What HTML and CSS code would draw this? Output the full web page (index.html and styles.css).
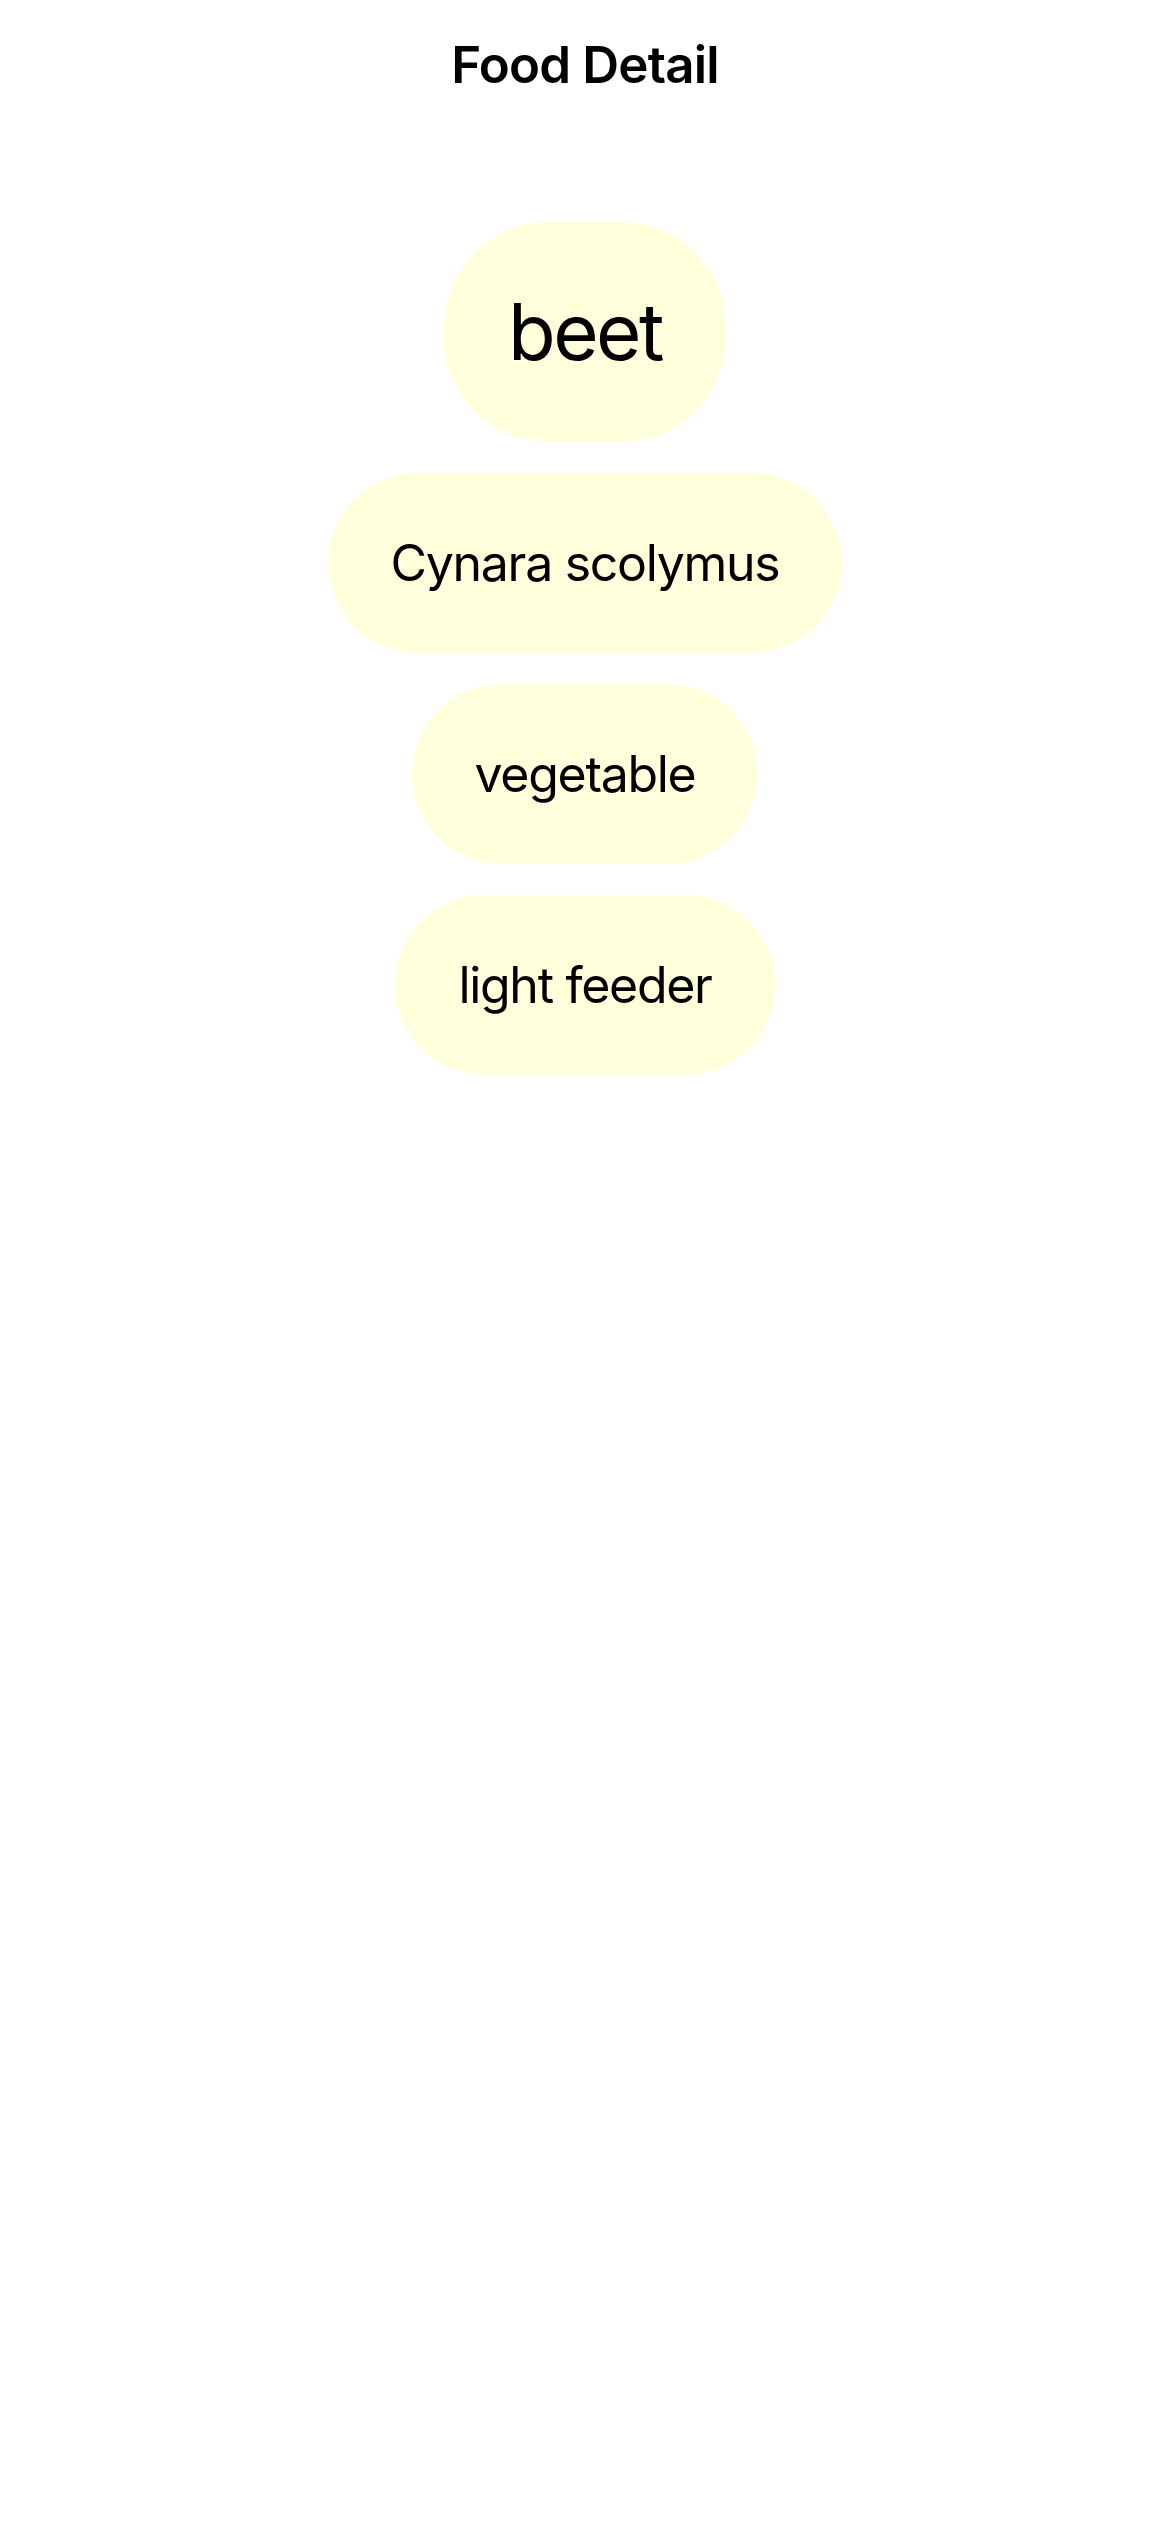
FILE: index.html
```html
<!DOCTYPE html>
<html lang="en">
<head>
<meta charset="utf-8">
<title>Food Detail</title>
<link rel="stylesheet" href="styles.css">
</head>
<body>
<header class="nav">
  <h1 class="nav-title">Food Detail</h1>
</header>
<main class="detail">
  <div class="pill pill-large">beet</div>
  <div class="pill">Cynara scolymus</div>
  <div class="pill">vegetable</div>
  <div class="pill">light feeder</div>
</main>
</body>
</html>
```

FILE: styles.css
```css
html, body {
  margin: 0;
  padding: 0;
  background: #ffffff;
}

body {
  width: 1170px;
  min-height: 2532px;
  font-family: Inter, "Noto Sans", "Liberation Sans", sans-serif;
  color: #000000;
}

.nav {
  height: 130px;
  display: flex;
  align-items: center;
  justify-content: center;
}

.nav-title {
  margin: 0;
  font-size: 51px;
  font-weight: 600;
  line-height: 60px;
  letter-spacing: -0.8px;
}

.detail {
  display: flex;
  flex-direction: column;
  align-items: center;
  gap: 31px;
  padding-top: 92px;
}

.pill {
  background: #ffffdc;
  border-radius: 90px;
  padding: 60px 63px;
  font-size: 50px;
  line-height: 60px;
  font-weight: 400;
  letter-spacing: -1.3px;
  white-space: nowrap;
}

.pill-large {
  border-radius: 104px;
  padding: 60px 64px;
  font-size: 78px;
  line-height: 100px;
  letter-spacing: -2.6px;
}
```
